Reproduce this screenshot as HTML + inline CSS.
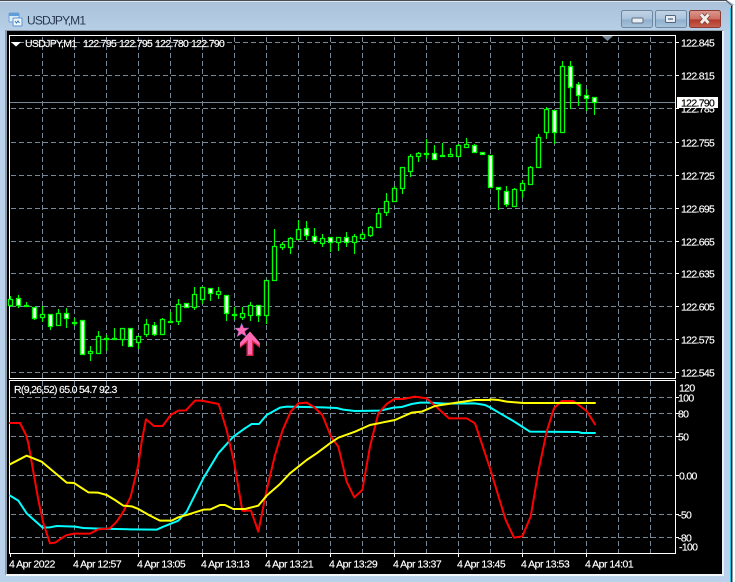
<!DOCTYPE html>
<html><head><meta charset="utf-8"><title>USDJPY,M1</title>
<style>
html,body{margin:0;padding:0;background:#fff}
body{width:735px;height:582px;overflow:hidden;position:relative}
svg{position:absolute;left:0;top:0}
text{font-family:"Liberation Sans",sans-serif;font-size:10.500px;letter-spacing:-.68px;fill:#fff;stroke:#fff;stroke-width:.15px}
.d{letter-spacing:-.5px}
</style></head><body>
<svg width="735" height="582" viewBox="0 0 735 582">
<defs>
<linearGradient id="top" x1="0" y1="0" x2="0" y2="1"><stop offset="0" stop-color="#a9c2d9"/><stop offset="1" stop-color="#b7cfe6"/></linearGradient>
<linearGradient id="btn" x1="0" y1="0" x2="0" y2="1"><stop offset="0" stop-color="#c3d4e5"/><stop offset=".5" stop-color="#aac3db"/><stop offset=".55" stop-color="#90afcc"/><stop offset="1" stop-color="#a8c4dd"/></linearGradient>
<linearGradient id="cls" x1="0" y1="0" x2="0" y2="1"><stop offset="0" stop-color="#dc9a90"/><stop offset=".5" stop-color="#cd6f63"/><stop offset=".55" stop-color="#b23a2c"/><stop offset="1" stop-color="#c8604e"/></linearGradient>
</defs>
<!-- window -->
<rect width="735" height="582" fill="#b9d1ea"/>
<rect x="0" y="0" width="735" height="31" fill="url(#top)"/>
<rect x="0" y="0" width="727" height="1" fill="#4a4f55"/>
<rect x="0" y="1" width="727" height="1" fill="#dfe8f0"/>
<path d="M727 0H735V5Z" fill="#fff"/>
<path d="M726 0.500L732.500 6" fill="none" stroke="#555" stroke-width="1"/>
<rect x="730" y="8" width="1" height="574" fill="#1fc4e8"/>
<rect x="731" y="6" width="1" height="576" fill="#222"/>
<rect x="732" y="6" width="1" height="576" fill="#999"/>
<rect x="733" y="5" width="2" height="577" fill="#fff"/>
<!-- title icon -->
<rect x="9" y="13" width="10" height="9" rx="1" fill="#dcebf8" stroke="#6fa3d6"/>
<rect x="9" y="13" width="10" height="3" fill="#5f9ddb"/>
<rect x="13" y="18" width="9" height="8" rx="1" fill="#eef6fc" stroke="#5b94cd"/>
<path d="M15 21l1.500 2 1.500-2 1.500 2" fill="none" stroke="#3a78b8" stroke-width="1"/>
<text x="27" y="24.500" style="font-size:12px;letter-spacing:-.85px;fill:#24374f;stroke:none">USDJPY,M1</text>
<!-- buttons -->
<rect x="621.500" y="10.500" width="31" height="17" rx="2" fill="url(#btn)" stroke="#6e87a0"/>
<rect x="632" y="18" width="11" height="5" rx="1" fill="#e8eef4" stroke="#5f6f80"/>
<rect x="655.500" y="10.500" width="31" height="17" rx="2" fill="url(#btn)" stroke="#6e87a0"/>
<rect x="665.500" y="15.500" width="10" height="7" rx="1" fill="#e8eef4" stroke="#55667a"/>
<rect x="668" y="18" width="5" height="2" fill="#7f96ad"/>
<rect x="689.500" y="10.500" width="31" height="17" rx="2" fill="url(#cls)" stroke="#8a3b33"/>
<path d="M701 14.500L708.500 23M708.500 14.500L701 23" stroke="#6b3a35" stroke-width="4.500" fill="none"/>
<path d="M701 14.500L708.500 23M708.500 14.500L701 23" stroke="#f2ece8" stroke-width="3" fill="none"/>
<!-- client frame -->
<rect x="5" y="30" width="718" height="545" fill="#8d99a5"/>
<rect x="7" y="31" width="715" height="543" fill="#000"/>
<rect x="6" y="574" width="717" height="2" fill="#f4f7fa"/>
<rect x="722" y="31" width="2" height="545" fill="#e8eff6"/>
<!-- grid -->
<g stroke="#778899" stroke-width="1" stroke-dasharray="5 3" fill="none">
<path d="M42.500 37V378M74.500 37V378M106.500 37V378M138.500 37V378M170.500 37V378M202.500 37V378M234.500 37V378M266.500 37V378M298.500 37V378M330.500 37V378M362.500 37V378M394.500 37V378M426.500 37V378M458.500 37V378M490.500 37V378M522.500 37V378M554.500 37V378M586.500 37V378M618.500 37V378M650.500 37V378"/>
<path d="M42.500 381V553M74.500 381V553M106.500 381V553M138.500 381V553M170.500 381V553M202.500 381V553M234.500 381V553M266.500 381V553M298.500 381V553M330.500 381V553M362.500 381V553M394.500 381V553M426.500 381V553M458.500 381V553M490.500 381V553M522.500 381V553M554.500 381V553M586.500 381V553M618.500 381V553M650.500 381V553"/>
<path d="M11 42.500H675M11 75.500H675M11 108.500H675M11 142.500H675M11 175.500H675M11 208.500H675M11 241.500H675M11 273.500H675M11 306.500H675M11 339.500H675M11 372.500H675"/>
<path d="M11 397.500H675M11 413.500H675M11 436.500H675M11 475.500H675M11 514.500H675M11 537.500H675"/>
</g>
<rect x="10" y="102" width="665" height="1" fill="#778899"/>
<!-- borders -->
<path d="M9.500 35.500H675.500V378.500H9.500Z M9.500 380.500H675.500V553.500H9.500Z" fill="none" stroke="#fff" stroke-width="1"/>
<path d="M675 42.500h4M675 75.500h4M675 108.500h4M675 142.500h4M675 175.500h4M675 208.500h4M675 241.500h4M675 273.500h4M675 306.500h4M675 339.500h4M675 372.500h4M675 397.500h4M675 413.500h4M675 436.500h4M675 475.500h4M675 514.500h4M675 537.500h4M10.500 553v4M74.500 553v4M138.500 553v4M202.500 553v4M266.500 553v4M330.500 553v4M394.500 553v4M458.500 553v4M522.500 553v4M586.500 553v4" stroke="#fff" fill="none"/>
<path d="M602 36h11l-5.500 5z" fill="#778899"/>
<path d="M11 42h10l-5 4.500z" fill="#fff"/>
<!-- wicks -->
<path fill="none" stroke="#0f0" stroke-width="1.150" d="M10.500 296V307M18.500 295V308M26.500 302V307M34.500 307V320M42.500 306V322M50.500 314V330M58.500 309V325M66.500 308V328M74.500 318V326M90.500 346V361M98.500 331V353M106.500 335V351M114.500 328V339M122.500 328V346M138.500 336V349M146.500 319V337M154.500 322V336M162.500 318V334M170.500 312V322M178.500 299V325M186.500 303V307M194.500 287V310M202.500 287V304M210.500 288V301M218.500 287V299M226.500 295V321M234.500 307V320M242.500 307V320M250.500 302V321M258.500 305V322M266.500 280V324M274.500 229V280M282.500 242V250M290.500 237V254M298.500 220V239M306.500 221V240M314.500 228V244M322.500 234V247M330.500 237V252M338.500 237V251M346.500 232V247M354.500 234V254M362.500 232V240M370.500 226V237M378.500 208V227M386.500 193V216M394.500 186V201M402.500 167V194M410.500 154V177M418.500 152V162M426.500 139V159M434.500 145V160M442.500 143V157M450.500 148V156M458.500 144V156M466.500 138V147M474.500 144V152M482.500 152V154M490.500 155V188M498.500 187V210M506.500 186V207M514.500 188V206M522.500 180V198M530.500 166V184M538.500 134V167M546.500 107V139M554.500 110V144M562.500 61V133M570.500 61V109M578.500 82V106M586.500 89V111M594.500 97V115"/>
<!-- hollow bodies -->
<path fill="#000" stroke="#0f0" stroke-width="1.350" d="M8.500 299.500h4v6h-4zM24.500 305.500h4v1h-4zM40.500 314.500h4v3h-4zM56.500 313.500h4v12h-4zM72.500 322.500h4v1h-4zM88.500 351.500h4v2h-4zM96.500 336.500h4v17h-4zM104.500 338.500h4v1h-4zM112.500 338.500h4v1h-4zM120.500 328.500h4v11h-4zM136.500 336.500h4v6h-4zM144.500 324.500h4v10h-4zM160.500 319.500h4v15h-4zM168.500 321.500h4v1h-4zM176.500 304.500h4v17h-4zM192.500 294.500h4v13h-4zM200.500 287.500h4v12h-4zM216.500 291.500h4v3h-4zM232.500 314.500h4v1h-4zM240.500 313.500h4v4h-4zM248.500 305.500h4v10h-4zM264.500 280.500h4v35h-4zM272.500 246.500h4v34h-4zM280.500 244.500h4v3h-4zM288.500 238.500h4v9h-4zM296.500 229.500h4v10h-4zM320.500 238.500h4v5h-4zM336.500 237.500h4v5h-4zM352.500 236.500h4v6h-4zM360.500 234.500h4v4h-4zM368.500 227.500h4v8h-4zM376.500 213.500h4v14h-4zM384.500 201.500h4v11h-4zM392.500 188.500h4v13h-4zM400.500 167.500h4v21h-4zM408.500 156.500h4v15h-4zM416.500 153.500h4v3h-4zM424.500 153.500h4v1h-4zM440.500 155.500h4v1h-4zM448.500 154.500h4v2h-4zM456.500 145.500h4v11h-4zM464.500 144.500h4v3h-4zM512.500 189.500h4v17h-4zM520.500 183.500h4v7h-4zM528.500 167.500h4v17h-4zM536.500 137.500h4v30h-4zM544.500 109.500h4v23h-4zM560.500 66.500h4v66h-4z"/>
<!-- white bodies -->
<path fill="#fff" stroke="#0f0" stroke-width="1.350" d="M16.500 298.500h4v7h-4zM32.500 307.500h4v11h-4zM48.500 314.500h4v12h-4zM64.500 313.500h4v5h-4zM80.500 320.500h4v34h-4zM128.500 328.500h4v18h-4zM152.500 325.500h4v9h-4zM184.500 303.500h4v4h-4zM208.500 288.500h4v5h-4zM224.500 295.500h4v18h-4zM256.500 305.500h4v10h-4zM304.500 228.500h4v7h-4zM312.500 236.500h4v5h-4zM328.500 237.500h4v5h-4zM344.500 237.500h4v5h-4zM432.500 153.500h4v6h-4zM472.500 145.500h4v7h-4zM480.500 152.500h4v2h-4zM488.500 155.500h4v32h-4zM496.500 187.500h4v2h-4zM504.500 191.500h4v13h-4zM552.500 110.500h4v22h-4zM568.500 66.500h4v21h-4zM576.500 84.500h4v11h-4zM584.500 95.500h4v3h-4zM592.500 97.500h4v5h-4z"/>
<!-- markers -->
<path d="M241.700 323l2 5h5.300l-4.200 3.400 1.600 5.400-4.700-3.100-4.700 3.100 1.600-5.400-4.200-3.400h5.300z" fill="#ff69b4" stroke="#5a55b0" stroke-width=".5"/>
<path d="M250 332L260 343V348L253.500 343V356H246.500V343L240 348V343Z" fill="#d8284a"/>
<path d="M250 331.500L259.500 342.500V345.500L252 340V354.500H248V340L240 346.500V342.500Z" fill="#ff69b4"/>
<!-- indicator lines -->
<g fill="none" stroke-width="6" stroke-linejoin="round" stroke-linecap="round">
<g transform="translate(0,375) scale(.3333)">
<path stroke="#00ffff" d="M30 362L55 377L80 415L128 458L150 457L170 453L225 455L250 459L300 461L390 463L470 464L490 455L535 437L560 410L585 360L610 310L655 235L700 185L735 160"/>
<path stroke="#ff0000" d="M30 144L60 144L78 180L85 205L100 290L115 375L130 445L150 505L165 503L198 481L222 476L270 476L295 463L330 460L350 440L370 410L392 365L415 270L425 200L438 133L462 153L488 153L512 120L535 107L558 106L585 77L605 77L656 87L680 165L703 265L727 407L735 408"/>
<path stroke="#ffff00" d="M30 268L80 242L125 260L200 323L222 324L265 352L295 353L320 360L345 375L370 392L395 394L415 402L450 422L480 437L515 437L535 427L570 417L610 404L632 403L660 390L675 390L700 402L735 402"/>
</g>
<g transform="translate(245,375) scale(.3333)">
<path stroke="#00ffff" d="M0 160L20 147L42 147L65 120L105 98L125 95L235 97L275 99L295 104L330 108L405 107L445 98L470 96L500 87L525 83L555 83L600 86L690 85L720 90L735 97"/>
<path stroke="#ff0000" d="M0 407L18 407L40 470L65 345L90 240L113 165L137 110L160 85L185 83L208 97L232 120L258 185L280 215L305 320L328 367L352 345L375 215L400 115L425 87L448 72L475 72L510 65L545 70L570 92L612 130L665 130L690 145L735 280"/>
<path stroke="#ffff00" d="M0 402L40 392L65 362L105 327L135 295L185 255L215 235L255 205L280 188L330 170L375 150L450 135L500 113L530 110L570 93L640 82L690 75L735 75"/>
</g>
<g transform="translate(490,375) scale(.3333)">
<path stroke="#00ffff" d="M0 97L30 115L70 138L120 170L265 171L275 174L315 174"/>
<path stroke="#ff0000" d="M0 280L47 435L72 488L97 484L122 425L145 290L170 170L192 100L215 78L250 78L290 108L315 148"/>
<path stroke="#ffff00" d="M0 73L25 75L50 80L100 84L315 84"/>
</g>
</g>
<!-- header texts -->
<text x="25" y="47">USDJPY,M1</text>
<text x="83" y="47">122.795</text>
<text x="119" y="47">122.795</text>
<text x="155" y="47">122.780</text>
<text x="191" y="47">122.790</text>
<text x="14" y="393">R(9,26,52) 65.0 54.7 92.3</text>
<!-- price axis -->
<text x="681" y="46.500">122.845</text>
<text x="681" y="79.500">122.815</text>
<text x="681" y="112.500">122.785</text>
<text x="681" y="146.500">122.755</text>
<text x="681" y="179.500">122.725</text>
<text x="681" y="212.500">122.695</text>
<text x="681" y="245.500">122.665</text>
<text x="681" y="277.500">122.635</text>
<text x="681" y="310.500">122.605</text>
<text x="681" y="343.500">122.575</text>
<text x="681" y="376.500">122.545</text>
<rect x="677" y="97" width="41" height="11" fill="#fff"/>
<text x="681" y="106.500" style="fill:#000;stroke:#000">122.790</text>
<!-- sub axis -->
<text x="679" y="391.500">120</text>
<text x="678" y="401.500">100</text>
<text x="678" y="417.500">80</text>
<text x="678" y="440.500">50</text>
<text x="679" y="479.500">0.00</text>
<text x="678" y="518.500">-50</text>
<text x="678" y="541.500">-80</text>
<text x="679" y="550.500">-100</text>
<!-- time axis -->
<text class="d" x="9" y="567.500">4 Apr 2022</text>
<text class="d" x="73" y="567.500">4 Apr 12:57</text>
<text class="d" x="137" y="567.500">4 Apr 13:05</text>
<text class="d" x="201" y="567.500">4 Apr 13:13</text>
<text class="d" x="265" y="567.500">4 Apr 13:21</text>
<text class="d" x="329" y="567.500">4 Apr 13:29</text>
<text class="d" x="393" y="567.500">4 Apr 13:37</text>
<text class="d" x="457" y="567.500">4 Apr 13:45</text>
<text class="d" x="521" y="567.500">4 Apr 13:53</text>
<text class="d" x="585" y="567.500">4 Apr 14:01</text>
</svg>
</body></html>
